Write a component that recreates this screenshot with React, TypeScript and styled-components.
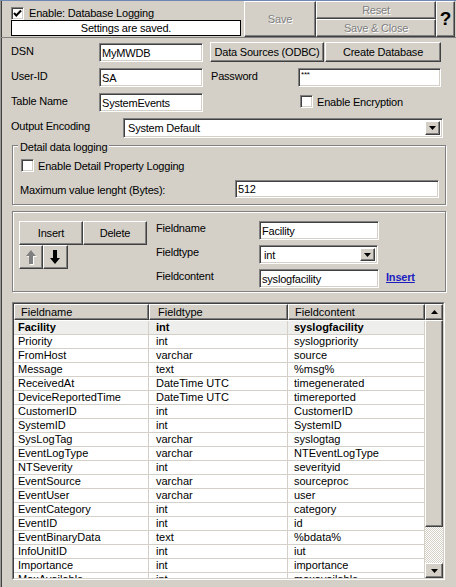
import styled, { createGlobalStyle, css } from 'styled-components';

const GlobalStyle = createGlobalStyle`
  html, body { margin: 0; padding: 0; background: #d4d0c8; }
  body {
    font-family: 'Liberation Sans', Arial, sans-serif;
    font-size: 11px;
    color: #000;
  }
  * { box-sizing: border-box; }
`;

const raised = css`
  border: 1px solid;
  border-color: #fff #404040 #404040 #fff;
  box-shadow: inset -1px -1px #808080;
  background: #d4d0c8;
`;

const sunken = css`
  border: 1px solid;
  border-color: #808080 #fff #fff #808080;
  box-shadow: inset 1px 1px #404040, inset -1px -1px #d4d0c8;
  background: #fff;
`;

const etched = css`
  border: 1px solid #808080;
  box-shadow: inset 1px 1px #fff, 1px 1px #fff;
`;

const Window = styled.div`
  width: 456px;
  height: 587px;
  overflow: hidden;
  border-top: 1px solid #6f87b3;
  border-left: 1px solid #9c9a94;
  box-shadow: inset 1px 0 #404040;
  letter-spacing: -0.2px;
`;

const Header = styled.div`
  display: flex;
  height: 37px;
  border-bottom: 1px solid #808080;
`;

const HeaderLeft = styled.div`
  width: 243px;
  padding: 5px 0 0 10px;
  display: flex;
  flex-direction: column;
`;

const CheckRow = styled.label`
  display: flex;
  align-items: center;
  gap: 5px;
  height: 14px;
`;

const Box = styled.span`
  ${sunken};
  width: 13px;
  height: 13px;
  flex: none;
  display: flex;
  align-items: center;
  justify-content: center;
`;

const StatusBox = styled.div`
  width: 230px;
  height: 16px;
  border: 1px solid #000;
  background: #fff;
  text-align: center;
  line-height: 14px;
`;

const ToolButton = styled.div<{ $w: number; $h: number }>`
  ${raised};
  width: ${(p) => p.$w}px;
  height: ${(p) => p.$h}px;
  display: flex;
  align-items: center;
  justify-content: center;
  color: #808080;
  text-shadow: 1px 1px #fff;
`;

const ToolColumn = styled.div`
  display: flex;
  flex-direction: column;
`;

const HelpButton = styled.div`
  ${raised};
  width: 19px;
  height: 36px;
  display: flex;
  align-items: center;
  justify-content: center;
  font-size: 19px;
  font-weight: bold;
`;

const Form = styled.div`
  padding: 5px 0 0 10px;
  display: flex;
  flex-direction: column;
  gap: 5px;
`;

const Row = styled.div`
  display: flex;
  align-items: flex-start;
  height: 20px;
`;

const Label = styled.span<{ $w: number }>`
  width: ${(p) => p.$w}px;
  flex: none;
  padding-top: 2px;
  white-space: nowrap;
`;

const TextInput = styled.input<{ $w: number; $small?: boolean }>`
  ${sunken};
  width: ${(p) => p.$w}px;
  height: 19px;
  padding: 0 2px;
  font-family: inherit;
  font-size: ${(p) => (p.$small ? '8px' : '11px')};
  letter-spacing: inherit;
  color: #000;
  outline: none;
  ${(p) => p.$small && 'padding-bottom: 6px;'}
`;

const PushButton = styled.div<{ $w: number; $ml?: number }>`
  ${raised};
  width: ${(p) => p.$w}px;
  height: 20px;
  margin-left: ${(p) => p.$ml ?? 0}px;
  margin-top: -1px;
  display: flex;
  align-items: center;
  justify-content: center;
  white-space: nowrap;
`;

const Select = styled.div<{ $w: number; $h: number }>`
  ${sunken};
  width: ${(p) => p.$w}px;
  height: ${(p) => p.$h}px;
  display: flex;
  align-items: center;
  justify-content: space-between;
  padding: 2px 2px 2px 4px;
`;

const ArrowButton = styled.span`
  ${raised};
  width: 15px;
  height: 100%;
  display: flex;
  align-items: center;
  justify-content: center;
`;

const InlineCheck = styled.label<{ $ml: number }>`
  display: flex;
  align-items: center;
  gap: 4px;
  margin-left: ${(p) => p.$ml}px;
  margin-top: 2px;
`;

const GroupBox = styled.div`
  ${etched};
  width: 434px;
  height: 60px;
  margin: 2px 0 0 1px;
  padding: 0 0 0 7px;
`;

const Legend = styled.div`
  width: fit-content;
  margin: -5px 0 0 -2px;
  padding: 0 2px;
  background: #d4d0c8;
  line-height: 13px;
`;

const GroupRow = styled.div<{ $mt: number }>`
  display: flex;
  align-items: center;
  margin-top: ${(p) => p.$mt}px;
`;

const Panel = styled.div`
  ${etched};
  width: 434px;
  height: 81px;
  margin: 1px 0 0 1px;
  padding: 9px 0 0 6px;
  display: flex;
`;

const ButtonBlock = styled.div`
  display: grid;
  grid-template-columns: 24px 25px 15px 64px;
  grid-template-rows: 24px 24px;
  width: 128px;
`;

const BlockButton = styled.div<{ $span?: number }>`
  ${raised};
  display: flex;
  align-items: center;
  justify-content: center;
  ${(p) => p.$span && `grid-column: span ${p.$span};`}
`;

const FieldGrid = styled.div`
  display: grid;
  grid-template-columns: 103px 120px auto;
  grid-auto-rows: 19px;
  row-gap: 5px;
  margin-left: 9px;
  align-items: start;
`;

const FieldLabel = styled.span`
  line-height: 14px;
`;

const InsertLink = styled.a`
  margin: 2px 0 0 7px;
  color: #1c1cc0;
  font-weight: bold;
  text-decoration: underline;
`;

const TableOuter = styled.div`
  width: 433px;
  height: 278px;
  margin: 5px 0 0 1px;
  border: 1px solid;
  border-color: #808080 #fff #fff #808080;
`;

const TableInner = styled.div`
  height: 100%;
  border: 1px solid;
  border-color: #404040 #d4d0c8 #d4d0c8 #404040;
  background: #fff;
  display: grid;
  grid-template-columns: 411px 18px;
  overflow: hidden;
  letter-spacing: 0;
`;

const Columns = styled.div`
  overflow: hidden;
`;

const HeadRow = styled.div`
  display: grid;
  grid-template-columns: 135px 139px 137px;
  height: 16px;
`;

const HeadCell = styled.div`
  ${raised};
  padding-left: 6px;
  line-height: 14px;
  &:nth-child(2) { padding-left: 8px; }
`;

const BodyRow = styled.div<{ $active?: boolean }>`
  display: grid;
  grid-template-columns: 135px 139px 137px;
  height: 14px;
  border-bottom: 1px solid #d4d0c8;
  background: ${(p) => (p.$active ? '#eeeeec' : '#fff')};
  font-weight: ${(p) => (p.$active ? 'bold' : 'normal')};
  ${(p) => p.$active && 'margin-top: 1px;'}
`;

const Cell = styled.div`
  padding-left: 6px;
  line-height: 13px;
  white-space: nowrap;
  overflow: hidden;
  border-right: 1px solid #d4d0c8;
  &:first-child { padding-left: 4px; }
  &:nth-child(2) { padding-left: 7px; }
`;

const ScrollBar = styled.div`
  display: flex;
  flex-direction: column;
  background: repeating-conic-gradient(#d4d0c8 0 25%, #fff 0 50%) 0 0 / 2px 2px;
`;

const ScrollButton = styled.div<{ $h: number }>`
  ${raised};
  height: ${(p) => p.$h}px;
  flex: none;
  display: flex;
  align-items: center;
  justify-content: center;
`;

const Thumb = styled.div`
  ${raised};
  height: 207px;
  flex: none;
`;

const Check = () => (
  <svg width="9" height="9" viewBox="0 0 9 9">
    <polyline points="1,4 3.3,6.5 8,1.5" fill="none" stroke="#000" strokeWidth="2" />
  </svg>
);

const Tri = ({ up }: { up?: boolean }) => (
  <svg width="7" height="4" viewBox="0 0 7 4">
    <polygon points={up ? '0,4 7,4 3.5,0' : '0,0 7,0 3.5,4'} fill="#000" />
  </svg>
);

const BigArrow = ({ up }: { up?: boolean }) => (
  <svg width="11" height="15" viewBox="0 0 11 15">
    {up ? (
      <>
        <polygon points="6,1 11,7 8,7 8,15 4,15 4,7 1,7" fill="#fff" />
        <polygon points="5,0 10,6 7,6 7,14 3,14 3,6 0,6" fill="#808080" />
      </>
    ) : (
      <polygon points="3,0 7,0 7,8 10,8 5,14 0,8 3,8" fill="#000" />
    )}
  </svg>
);

const rows: [string, string, string][] = [
  ['Facility', 'int', 'syslogfacility'],
  ['Priority', 'int', 'syslogpriority'],
  ['FromHost', 'varchar', 'source'],
  ['Message', 'text', '%msg%'],
  ['ReceivedAt', 'DateTime UTC', 'timegenerated'],
  ['DeviceReportedTime', 'DateTime UTC', 'timereported'],
  ['CustomerID', 'int', 'CustomerID'],
  ['SystemID', 'int', 'SystemID'],
  ['SysLogTag', 'varchar', 'syslogtag'],
  ['EventLogType', 'varchar', 'NTEventLogType'],
  ['NTSeverity', 'int', 'severityid'],
  ['EventSource', 'varchar', 'sourceproc'],
  ['EventUser', 'varchar', 'user'],
  ['EventCategory', 'int', 'category'],
  ['EventID', 'int', 'id'],
  ['EventBinaryData', 'text', '%bdata%'],
  ['InfoUnitID', 'int', 'iut'],
  ['Importance', 'int', 'importance'],
  ['MaxAvailable', 'int', 'maxavailable'],
];

export default function App() {
  return (
    <>
      <GlobalStyle />
      <Window>
        <Header>
          <HeaderLeft>
            <CheckRow>
              <Box>
                <Check />
              </Box>
              <span>Enable: Database Logging</span>
            </CheckRow>
            <StatusBox>Settings are saved.</StatusBox>
          </HeaderLeft>
          <ToolButton $w={72} $h={36}>Save</ToolButton>
          <ToolColumn>
            <ToolButton $w={120} $h={18}>Reset</ToolButton>
            <ToolButton $w={120} $h={18}>Save &amp; Close</ToolButton>
          </ToolColumn>
          <HelpButton>?</HelpButton>
        </Header>

        <Form>
          <Row>
            <Label $w={88}>DSN</Label>
            <TextInput $w={104} readOnly defaultValue="MyMWDB" />
            <PushButton $w={114} $ml={7}>Data Sources (ODBC)</PushButton>
            <PushButton $w={116} $ml={1}>Create Database</PushButton>
          </Row>
          <Row>
            <Label $w={88}>User-ID</Label>
            <TextInput $w={104} readOnly defaultValue="SA" />
            <Label $w={87} style={{ marginLeft: 8 }}>Password</Label>
            <TextInput $w={143} $small readOnly defaultValue="***" />
          </Row>
          <Row>
            <Label $w={88}>Table Name</Label>
            <TextInput $w={104} readOnly defaultValue="SystemEvents" />
            <InlineCheck $ml={97}>
              <Box />
              Enable Encryption
            </InlineCheck>
          </Row>
          <Row>
            <Label $w={112}>Output Encoding</Label>
            <Select $w={320} $h={20}>
              System Default
              <ArrowButton>
                <Tri />
              </ArrowButton>
            </Select>
          </Row>

          <GroupBox>
            <Legend>Detail data logging</Legend>
            <GroupRow $mt={5}>
              <InlineCheck $ml={1} style={{ marginTop: 0 }}>
                <Box />
                Enable Detail Property Logging
              </InlineCheck>
            </GroupRow>
            <GroupRow $mt={8}>
              <Label $w={215}>Maximum value lenght (Bytes):</Label>
              <TextInput $w={204} readOnly defaultValue="512" style={{ height: 18 }} />
            </GroupRow>
          </GroupBox>

          <Panel>
            <ButtonBlock>
              <BlockButton $span={3}>Insert</BlockButton>
              <BlockButton>Delete</BlockButton>
              <BlockButton>
                <BigArrow up />
              </BlockButton>
              <BlockButton>
                <BigArrow />
              </BlockButton>
            </ButtonBlock>
            <FieldGrid>
              <FieldLabel>Fieldname</FieldLabel>
              <TextInput $w={120} readOnly defaultValue="Facility" />
              <span />
              <FieldLabel>Fieldtype</FieldLabel>
              <Select $w={119} $h={19}>
                int
                <ArrowButton>
                  <Tri />
                </ArrowButton>
              </Select>
              <span />
              <FieldLabel>Fieldcontent</FieldLabel>
              <TextInput $w={120} readOnly defaultValue="syslogfacility" />
              <InsertLink>Insert</InsertLink>
            </FieldGrid>
          </Panel>

          <TableOuter>
            <TableInner>
              <Columns>
                <HeadRow>
                  <HeadCell>Fieldname</HeadCell>
                  <HeadCell>Fieldtype</HeadCell>
                  <HeadCell>Fieldcontent</HeadCell>
                </HeadRow>
                {rows.map(([name, type, content], i) => (
                  <BodyRow key={name} $active={i === 0}>
                    <Cell>{name}</Cell>
                    <Cell>{type}</Cell>
                    <Cell>{content}</Cell>
                  </BodyRow>
                ))}
              </Columns>
              <ScrollBar>
                <ScrollButton $h={16}>
                  <Tri up />
                </ScrollButton>
                <Thumb />
                <div style={{ flex: 1 }} />
                <ScrollButton $h={15}>
                  <Tri />
                </ScrollButton>
              </ScrollBar>
            </TableInner>
          </TableOuter>
        </Form>
      </Window>
    </>
  );
}
